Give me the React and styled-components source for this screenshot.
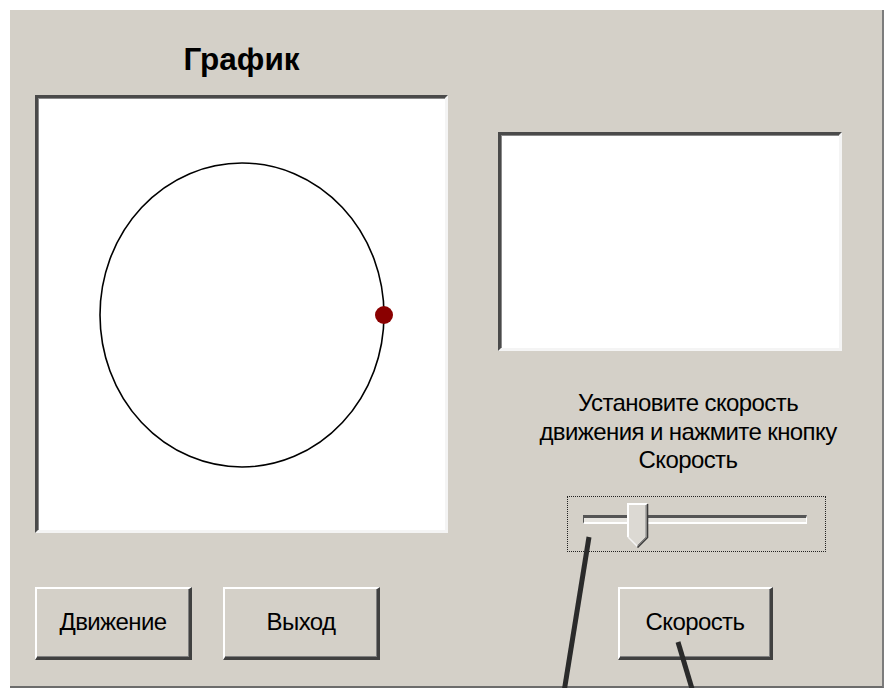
import styled, { createGlobalStyle } from "styled-components";

const GlobalStyle = createGlobalStyle`
  html, body {
    margin: 0;
    padding: 0;
    background: #fff;
  }
  body {
    font-family: "Liberation Sans", Arial, sans-serif;
    color: #000;
  }
`;

// orbit drawn on the canvas, in canvas pixels
const orbit = { cx: 204, cy: 217, rx: 142, ry: 152 };
const angle = 0;
const speed = 0.235; // 0..1 position of the slider thumb

export default function App() {
  const dotX = orbit.cx + orbit.rx * Math.cos(angle);
  const dotY = orbit.cy - orbit.ry * Math.sin(angle);

  return (
    <Page>
      <GlobalStyle />
      <Form>
        <LeftColumn>
          <Title>График</Title>
          <Canvas>
            <svg width="407" height="432" viewBox="0 0 407 432">
              <ellipse
                cx={orbit.cx}
                cy={orbit.cy}
                rx={orbit.rx}
                ry={orbit.ry}
                fill="none"
                stroke="#000"
                strokeWidth="1.6"
              />
              <circle cx={dotX} cy={dotY} r="9" fill="#8a0000" />
            </svg>
          </Canvas>
        </LeftColumn>

        <RightColumn>
          <InfoBox />
          <Hint>
            Установите скорость
            <br />
            движения и нажмите кнопку
            <br />
            Скорость
          </Hint>
          <TrackBar>
            <Track />
            <Thumb style={{ left: 12 + speed * 200 }}>
              <svg width="22" height="45" viewBox="0 0 22 45">
                <path d="M1 1 H20 V34 L10.5 43.5 L1 34 Z" fill="#dcd9d3" />
                <path d="M1 34 V1 H20" fill="none" stroke="#fff" strokeWidth="2" />
                <path d="M1 34 L10.5 43.5" fill="none" stroke="#f4f4f4" strokeWidth="1.5" />
                <path d="M19 2 V34 L10.5 42.5" fill="none" stroke="#808080" strokeWidth="1" />
                <path d="M20.5 1 V34.5 L10.5 44.5" fill="none" stroke="#3c3c3c" strokeWidth="1.6" />
              </svg>
            </Thumb>
          </TrackBar>
        </RightColumn>

        <ButtonRow>
          <Button>Движение</Button>
          <Button>Выход</Button>
        </ButtonRow>
        <ButtonRow $offset={120}>
          <Button $width={155}>Скорость</Button>
        </ButtonRow>
      </Form>

      <Pointers width="885" height="688" viewBox="0 0 885 688">
        <line x1="589" y1="537" x2="564" y2="692" stroke="#2a2a2a" strokeWidth="5" />
        <line x1="678" y1="642" x2="693" y2="692" stroke="#2a2a2a" strokeWidth="5" />
      </Pointers>
    </Page>
  );
}

const Page = styled.div`
  position: relative;
  width: 885px;
  height: 688px;
  overflow: hidden;
`;

const Form = styled.div`
  margin: 10px 0 0 10px;
  width: 874px;
  height: 678px;
  box-sizing: border-box;
  padding-left: 25px;
  background: #d4d0c8;
  border-right: 2px solid #7c7c7c;
  border-bottom: 2px solid #6c6c6c;
  display: grid;
  grid-template-columns: 413px 344px;
  grid-template-rows: 577px 73px;
  column-gap: 50px;
`;

const LeftColumn = styled.div`
  display: flex;
  flex-direction: column;
`;

const Title = styled.div`
  padding: 32px 0 19px;
  font-weight: 700;
  font-size: 31.5px;
  line-height: 34px;
  text-align: center;
`;

const Sunken = styled.div`
  box-sizing: border-box;
  background: #fff;
  border-style: solid;
  border-width: 3px;
  border-color: #4a4a4a #f4f4f4 #f4f4f4 #4a4a4a;
  box-shadow: inset 1px 1px 0 #8a8a8a;
`;

const Canvas = styled(Sunken)`
  width: 413px;
  height: 438px;
  svg {
    display: block;
  }
`;

const RightColumn = styled.div`
  display: flex;
  flex-direction: column;
  padding-top: 122px;
`;

const InfoBox = styled(Sunken)`
  width: 344px;
  height: 219px;
`;

const Hint = styled.div`
  margin: 38px 0 0 40px;
  width: 300px;
  font-size: 24px;
  letter-spacing: -0.6px;
  line-height: 28.5px;
  text-align: center;
  white-space: nowrap;
`;

const TrackBar = styled.div`
  position: relative;
  margin: 21px 0 0 69px;
  width: 259px;
  height: 56px;
  box-sizing: border-box;
  border: 1px dotted #222;
  padding: 18px 18px 0 15px;
`;

const Track = styled.div`
  height: 4px;
  border-style: solid;
  border-width: 3px 1px 2px 1px;
  border-color: #555 #fff #fff #555;
  background: #e6e4df;
`;

const Thumb = styled.div`
  position: absolute;
  top: 6px;
  width: 22px;
  height: 45px;
  svg {
    display: block;
  }
`;

const ButtonRow = styled.div`
  display: flex;
  gap: 31px;
  padding-left: ${(props) => props.$offset || 0}px;
`;

const Button = styled.button`
  width: ${(props) => props.$width || 157}px;
  height: 73px;
  box-sizing: border-box;
  padding: 0 0 2px;
  background: #d4d0c8;
  font-family: inherit;
  font-size: 24px;
  letter-spacing: -0.6px;
  color: #000;
  border-style: solid;
  border-width: 2px 3px 3px 2px;
  border-color: #fff #404040 #404040 #fff;
  box-shadow: inset -1px -1px 0 #808080;
  display: flex;
  align-items: center;
  justify-content: center;
`;

const Pointers = styled.svg`
  position: absolute;
  top: 0;
  left: 0;
  pointer-events: none;
`;
